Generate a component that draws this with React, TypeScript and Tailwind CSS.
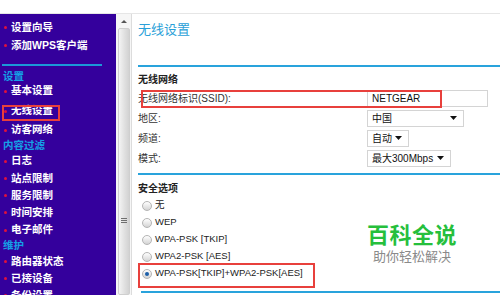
import type { ReactNode } from 'react'

type MenuRow =
  | { kind: 'item'; label: string; cls: string; boxed?: boolean }
  | { kind: 'head'; label: string; cls: string }
  | { kind: 'sep' }

const menu: MenuRow[] = [
  { kind: 'item', label: '设置向导', cls: 'h-[17px]' },
  { kind: 'item', label: '添加WPS客户端', cls: 'h-[19px]' },
  { kind: 'sep' },
  { kind: 'head', label: '设置', cls: 'mt-[4px] h-[14px]' },
  { kind: 'item', label: '基本设置', cls: 'h-[14px]' },
  { kind: 'item', label: '无线设置', cls: 'mt-[3px] h-[20px]', boxed: true },
  { kind: 'item', label: '访客网络', cls: 'h-[18px]' },
  { kind: 'head', label: '内容过滤', cls: 'h-[13px]' },
  { kind: 'item', label: '日志', cls: 'h-[18px]' },
  { kind: 'item', label: '站点限制', cls: 'h-[17px]' },
  { kind: 'item', label: '服务限制', cls: 'h-[17px]' },
  { kind: 'item', label: '时间安排', cls: 'h-[17px]' },
  { kind: 'item', label: '电子邮件', cls: 'h-[18px]' },
  { kind: 'head', label: '维护', cls: 'h-[14px]' },
  { kind: 'item', label: '路由器状态', cls: 'h-[17px]' },
  { kind: 'item', label: '已接设备', cls: 'h-[17px]' },
  { kind: 'item', label: '备份设置', cls: 'h-[17px]' },
]

const radios = ['无', 'WEP', 'WPA-PSK [TKIP]', 'WPA2-PSK [AES]', 'WPA-PSK[TKIP]+WPA2-PSK[AES]']

function Caret() {
  return (
    <svg className="w-[7px] h-[4px]" viewBox="0 0 7 4">
      <path d="M0 0h7L3.5 4z" fill="#111" />
    </svg>
  )
}

function Field({ width, children, arrow }: { width: string; children: ReactNode; arrow?: boolean }) {
  return (
    <div
      className={`${width} h-[17px] border border-[#d4d4d4] bg-white flex items-center justify-between pl-[4px] pr-[6px] text-[10px] text-[#111]`}
    >
      <span>{children}</span>
      {arrow && <Caret />}
    </div>
  )
}

function Radio({ checked }: { checked?: boolean }) {
  return (
    <span className="w-[10px] h-[10px] rounded-full border border-[#b4b4b4] bg-gradient-to-b from-white to-[#d4d4d4] flex items-center justify-center mr-[3px] shrink-0">
      {checked && <span className="w-[4px] h-[4px] rounded-full bg-[#1d5fa8]" />}
    </span>
  )
}

export default function App() {
  return (
    <div
      className="w-[500px] h-[295px] overflow-hidden bg-white flex flex-col"
      style={{ fontFamily: '"Liberation Sans", "Noto Sans CJK SC", sans-serif' }}
    >
      {/* 顶部空白 */}
      <div className="h-[14px] shrink-0 border-b border-[#e6e6e6]" />

      <div className="flex flex-1 min-h-0">
        {/* 左侧菜单 */}
        <div className="w-[116px] shrink-0 bg-[#34009c] pt-[5px] overflow-hidden">
          {menu.map((row, i) => {
            if (row.kind === 'sep') {
              return (
                <div key={i} className="pt-[9px]">
                  <div className="ml-[2px] w-[100px] h-[2px] bg-[#1c98d8]" />
                </div>
              )
            }
            if (row.kind === 'head') {
              return (
                <div key={i} className={`${row.cls} flex items-center pl-[3px] text-[10.5px] font-bold text-[#14a0e6]`}>
                  {row.label}
                </div>
              )
            }
            return (
              <div key={i} className={`${row.cls} relative flex items-center text-[10.5px] font-bold text-white`}>
                <span className="ml-[4px] mr-[4px] w-[3px] h-[3px] rounded-full bg-[#e0103c]" />
                {row.label}
                {row.boxed && (
                  <span className="absolute left-[2px] top-[4px] w-[58px] h-[16px] border-2 border-[#e8403c]" />
                )}
              </div>
            )
          })}
        </div>

        {/* 滚动条 */}
        <div className="w-[15px] shrink-0 bg-[#f6f6f6] flex flex-col items-center">
          <div className="h-[14px] flex items-center justify-center">
            <svg className="w-[6px] h-[3px]" viewBox="0 0 6 3">
              <path d="M0 3L3 0l3 3z" fill="#555" />
            </svg>
          </div>
          <div className="flex-1 w-[12px] border border-[#cfcfcf] rounded-[2px] bg-gradient-to-r from-[#f4f4f4] via-[#e2e2e2] to-[#d2d2d2] flex flex-col items-center pt-[189px]">
            <div className="w-[6px] h-[1px] bg-[#6e6e6e]" />
            <div className="w-[6px] h-[1px] bg-[#6e6e6e] mt-[1px]" />
            <div className="w-[6px] h-[1px] bg-[#6e6e6e] mt-[1px]" />
          </div>
        </div>

        {/* 内容区 */}
        <div className="flex-1 relative border-l border-[#dcdcdc] pl-[6px] text-[#333]">
          <div className="pt-[5px] h-[21px] flex items-center text-[13px] text-[#2a9fd8]" style={{ boxSizing: 'content-box' }}>
            无线设置
          </div>
          <div className="mt-[25px] h-[2px] bg-[#29a3dc]" />

          <div className="mt-[5px] h-[14px] flex items-center text-[10px] font-bold text-[#222]">无线网络</div>

          <div className="mt-[2px]">
            <div className="relative h-[20px] flex items-center">
              <div className="w-[229px] text-[10px]">无线网络标识(SSID):</div>
              <Field width="w-[121px]">NETGEAR</Field>
              <span className="absolute left-[3px] top-[2px] w-[301px] h-[18px] border-2 border-[#e8403c]" />
            </div>
            <div className="h-[20px] flex items-center">
              <div className="w-[229px] text-[10px]">地区:</div>
              <Field width="w-[97px]" arrow>
                中国
              </Field>
            </div>
            <div className="h-[20px] flex items-center">
              <div className="w-[229px] text-[10px]">频道:</div>
              <Field width="w-[42px]" arrow>
                自动
              </Field>
            </div>
            <div className="h-[20px] flex items-center">
              <div className="w-[229px] text-[10px]">模式:</div>
              <Field width="w-[84px]" arrow>
                最大300Mbps
              </Field>
            </div>
          </div>

          <div className="mt-[5px] h-[2px] bg-[#29a3dc]" />

          <div className="mt-[6px] h-[14px] flex items-center text-[10px] font-bold text-[#222]">安全选项</div>

          <div className="mt-[2px]">
            {radios.map((r, i) => (
              <div key={r} className="relative h-[17px] flex items-center pl-[4px] text-[9.5px] text-[#222]">
                <Radio checked={i === radios.length - 1} />
                {r}
                {i === radios.length - 1 && (
                  <span className="absolute left-0 top-[-2px] w-[177px] h-[25px] border-2 border-[#e8403c]" />
                )}
              </div>
            ))}
          </div>

          <div className="mt-[9px] ml-[3px] h-[2px] bg-[#29a3dc]" />

          {/* 水印 */}
          <div className="absolute left-[235px] top-[209px] flex flex-col items-center">
            <div className="text-[22px] leading-[26px] font-bold text-[#26bf3c] tracking-[0.5px]">百科全说</div>
            <div className="text-[13px] leading-[16px] text-[#8a8a8a]">助你轻松解决</div>
          </div>
        </div>
      </div>
    </div>
  )
}
